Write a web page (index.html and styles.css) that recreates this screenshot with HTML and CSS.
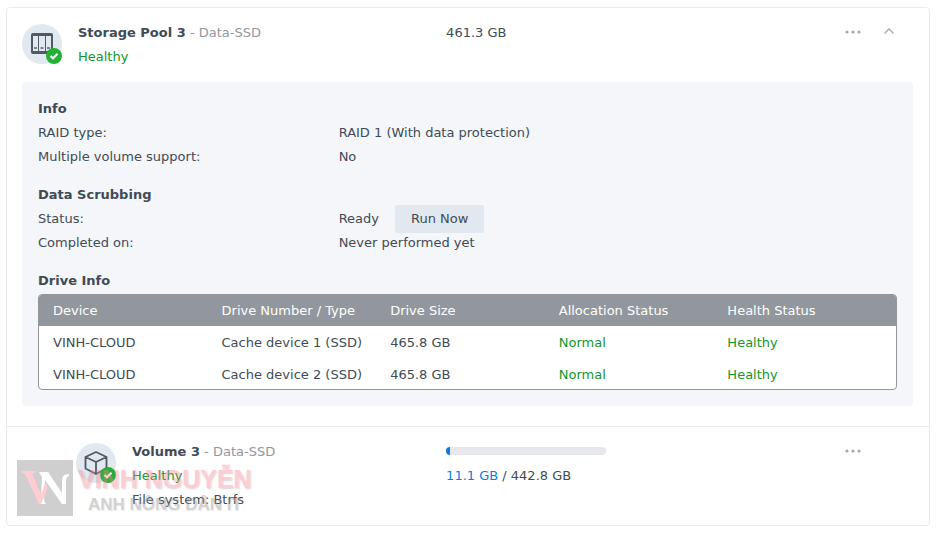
FILE: index.html
```html
<!DOCTYPE html>
<html lang="en">
<head>
  <meta charset="UTF-8" />
  <meta name="viewport" content="width=device-width, initial-scale=1.0"/>
  <title>Storage Pool 3</title>
  <link rel="stylesheet" href="styles.css">
</head>
<body>

  <main class="card">
    <section class="pool">
      <header class="row">
        <div class="identity">
          <div class="icon">
            <svg class="icon-main" viewBox="0 0 40 40" aria-hidden="true">
              <path d="M11 9h18a2 2 0 0 1 2 2v17a2 2 0 0 1-2 2H11a2 2 0 0 1-2-2V11a2 2 0 0 1 2-2z" fill="#505a64"/>
              <path d="M11 12h5v15h-5zM17 12h6v15h-6zM24 12h5v15h-5z" fill="#e1e8ef"/>
              <path d="M12 23h3v2h-3zM18.500 23h3v2h-3zM25 23h3v2h-3z" fill="#7c858e"/>
            </svg>
            <svg class="icon-badge" viewBox="0 0 16 16" aria-hidden="true">
              <circle cx="8" cy="8" r="8" fill="#22b132"/>
              <path d="M4.500 8l2.500 2.300 4.500-4.500" fill="none" stroke="#fff" stroke-width="2.200"/>
            </svg>
          </div>
          <div class="text">
            <div><strong>Storage Pool 3</strong> <span class="muted">- Data-SSD</span></div>
            <div class="ok">Healthy</div>
          </div>
        </div>
        <div class="size">461.3 GB</div>
        <div class="actions">
          <button type="button" class="icon-button" aria-label="More">
            <svg width="16" height="4" viewBox="0 0 16 4"><circle cx="2" cy="2" r="1.600"/><circle cx="8" cy="2" r="1.600"/><circle cx="14" cy="2" r="1.600"/></svg>
          </button>
          <button type="button" class="icon-button" aria-label="Collapse">
            <svg width="12" height="10" viewBox="0 0 12 10"><path d="M1.500 6.500L6 2l4.500 4.500" fill="none" stroke="#b0b3b7" stroke-width="1.600"/></svg>
          </button>
        </div>
      </header>

      <div class="panel">
        <h2>Info</h2>
        <dl class="details">
          <dt>RAID type:</dt>
          <dd>RAID 1 (With data protection)</dd>
          <dt>Multiple volume support:</dt>
          <dd>No</dd>
        </dl>

        <h2>Data Scrubbing</h2>
        <dl class="details">
          <dt>Status:</dt>
          <dd class="status">Ready <button type="button" class="run">Run Now</button></dd>
          <dt>Completed on:</dt>
          <dd>Never performed yet</dd>
        </dl>

        <h2>Drive Info</h2>
        <div class="drives">
          <table>
            <thead>
              <tr>
                <th scope="col">Device</th>
                <th scope="col">Drive Number / Type</th>
                <th scope="col">Drive Size</th>
                <th scope="col">Allocation Status</th>
                <th scope="col">Health Status</th>
              </tr>
            </thead>
            <tbody>
              <tr>
                <td>VINH-CLOUD</td>
                <td>Cache device 1 (SSD)</td>
                <td>465.8 GB</td>
                <td class="ok">Normal</td>
                <td class="ok">Healthy</td>
              </tr>
              <tr>
                <td>VINH-CLOUD</td>
                <td>Cache device 2 (SSD)</td>
                <td>465.8 GB</td>
                <td class="ok">Normal</td>
                <td class="ok">Healthy</td>
              </tr>
            </tbody>
          </table>
        </div>
      </div>
    </section>

    <section class="volume">
      <div class="row">
        <div class="identity identity-nested">
          <div class="icon">
            <svg class="icon-main" viewBox="0 0 40 40" aria-hidden="true">
              <path d="M20 9L30.500 14v11.500L20 31 9.500 25.500V14zM9.500 14L20 19l10.500-5M20 19V31" fill="none" stroke="#505a64" stroke-width="1.800" stroke-linejoin="round"/>
            </svg>
            <svg class="icon-badge" viewBox="0 0 16 16" aria-hidden="true">
              <circle cx="8" cy="8" r="8" fill="#22b132"/>
              <path d="M4.500 8l2.500 2.300 4.500-4.500" fill="none" stroke="#fff" stroke-width="2.200"/>
            </svg>
          </div>
          <div class="text">
            <div><strong>Volume 3</strong> <span class="muted">- Data-SSD</span></div>
            <div class="ok">Healthy</div>
            <div>File system: Btrfs</div>
          </div>
        </div>
        <div class="size">
          <div class="meter"><div class="meter-track"><div class="meter-fill" style="width: 2.5%"></div></div></div>
          <div><span class="used">11.1 GB</span> / 442.8 GB</div>
        </div>
        <div class="actions">
          <button type="button" class="icon-button" aria-label="More">
            <svg width="16" height="4" viewBox="0 0 16 4"><circle cx="2" cy="2" r="1.600"/><circle cx="8" cy="2" r="1.600"/><circle cx="14" cy="2" r="1.600"/></svg>
          </button>
        </div>
      </div>

      <!-- Watermark -->
      <div class="watermark">
        <svg class="watermark-logo" viewBox="0 0 56 56" aria-hidden="true">
          <path d="M0 0h56v56H0z" fill="#8a8a8a"/>
          <path d="M22 12h9l14 21V20q0-6 7-6v2q-3 1-3 5v23h-4L28 20l-1 19q0 3 2 5h-7l2-5 1-22z" fill="#fff"/>
          <path d="M5 11h13v2q-3 0-2 3l8 19 4-12 3 4-7 17h-2L9 16q-1-3-4-3z" fill="#ff8294"/>
        </svg>
        <div class="watermark-text">
          <div class="watermark-name">VINH NGUYỄN</div>
          <div class="watermark-tagline">ANH NÔNG DÂN IT</div>
        </div>
      </div>
    </section>
  </main>

</body>
</html>
```
FILE: styles.css
```css
* {
  box-sizing: border-box;
}

body {
  margin: 7px 9px 7px 6px;
  background: #fff;
  color: #414b55;
  font-family: Verdana, "DejaVu Sans", sans-serif;
  font-size: 13px;
  line-height: 24px;
}

button {
  font: inherit;
  color: inherit;
  border: none;
  cursor: pointer;
}

.card {
  border: 1px solid #e8eaf0;
  border-radius: 4px;
}

.pool {
  padding: 13px 16px 20px 15px;
}

.volume {
  position: relative;
  padding: 13px 16px 13px 15px;
  border-top: 1px solid #e8eaf0;
}

.row {
  display: grid;
  grid-template-columns: 47.6% 1fr 72px;
  align-items: start;
}

.identity {
  display: flex;
  gap: 16px;
}

.identity-nested {
  padding-left: 54px;
}

.icon {
  position: relative;
  flex: none;
  width: 40px;
  height: 40px;
  margin-top: 3px;
  border-radius: 50%;
  background: #e1e8ef;
}

.icon-main {
  display: block;
  width: 40px;
  height: 40px;
}

.icon-badge {
  position: absolute;
  right: 0;
  bottom: 0;
  width: 16px;
  height: 16px;
}

.muted {
  color: #92979e;
}

.ok {
  color: #12962a;
}

.used {
  color: #0f7ce4;
}

.actions {
  display: flex;
  gap: 12px;
}

.icon-button {
  display: flex;
  align-items: center;
  justify-content: center;
  width: 24px;
  height: 22px;
  padding: 0;
  background: none;
  fill: #a4a7b0;
}

.panel {
  margin-top: 13px;
  padding: 15px 16px 16px;
  border-radius: 4px;
  background: #f4f6fa;
}

.panel h2 {
  margin: 0;
  font-size: 13px;
  line-height: 24px;
}

.details {
  display: grid;
  grid-template-columns: 35% 65%;
  grid-auto-rows: 24px;
  margin: 0 0 14px;
}

.details dd {
  margin: 0;
}

.status {
  display: flex;
  align-items: center;
  gap: 16px;
}

.run {
  height: 28px;
  padding: 0 16px;
  border-radius: 3px;
  background: #e1e8ef;
}

.drives {
  margin-top: 1px;
  overflow: hidden;
  border: 1px solid #92979e;
  border-radius: 4px;
  background: #fff;
}

.drives table {
  width: 100%;
  table-layout: fixed;
  border-collapse: collapse;
}

.drives th,
.drives td {
  height: 32px;
  padding: 2px 0 0;
  text-align: left;
  font-weight: normal;
}

.drives thead th {
  height: 31px;
  padding: 0;
  background: #92979e;
  color: #fff;
}

.drives tbody tr:last-child td {
  height: 31px;
}

.drives th:first-child,
.drives td:first-child {
  width: 21.3%;
  padding-left: 14px;
}

.meter {
  display: flex;
  align-items: center;
  height: 24px;
  padding-bottom: 2px;
}

.meter-track {
  width: 160px;
  height: 8px;
  overflow: hidden;
  border-radius: 4px;
  background: #e6e8eb;
}

.meter-fill {
  height: 100%;
  background: #0f7ce4;
}

/* Sits over the volume row */
.watermark {
  position: absolute;
  left: 10px;
  bottom: 9px;
  display: flex;
  gap: 5px;
  opacity: 0.4;
  pointer-events: none;
  font-family: "Liberation Sans", Arial, sans-serif;
  font-weight: bold;
  white-space: nowrap;
}

.watermark-logo {
  width: 56px;
  height: 56px;
}

.watermark-name {
  padding-top: 5px;
  font-size: 25px;
  line-height: 28px;
  color: #ff8294;
  text-shadow: 1px 1px 2px #999;
}

.watermark-tagline {
  padding-left: 10px;
  font-size: 17px;
  line-height: 23px;
  color: #909090;
  text-shadow: 1px 1px 1px #ccc;
}
```
